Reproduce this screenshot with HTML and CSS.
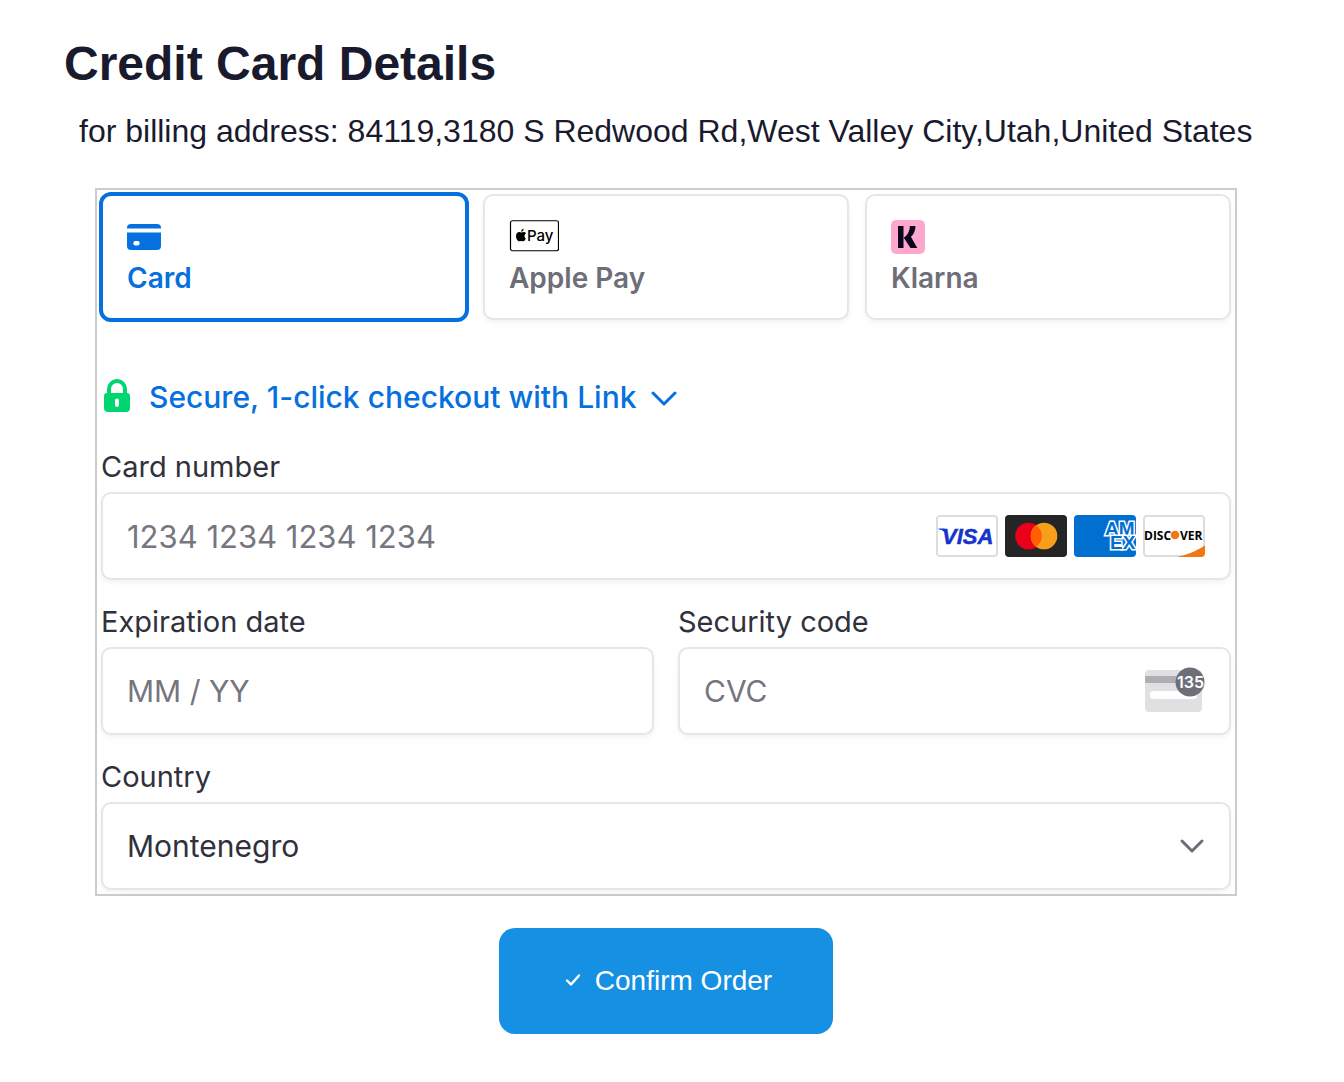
FILE: index.html
```
<!DOCTYPE html>
<html lang="en">
<head>
<meta charset="UTF-8" />
<meta name="viewport" content="width=device-width, initial-scale=1" />
<title>Credit Card Details</title>
<link rel="stylesheet" href="styles.css">
</head>
<body>

<main class="checkout">
  <h1>Credit Card Details</h1>
  <p class="address">for billing address: 84119,3180 S Redwood Rd,West Valley City,Utah,United States</p>

  <form id="paymentForm">
    <div class="payment">
      <div class="tabs" role="tablist">
        <button type="button" class="tab selected" role="tab" aria-selected="true">
          <span class="tabIcon">
            <svg width="34" height="26" viewBox="0 0 34 26" fill="#0570de">
              <path d="M0 4.500V4a4 4 0 0 1 4-4h26a4 4 0 0 1 4 4v.5z" />
              <path fill-rule="evenodd" d="M0 8.500h34V22a4 4 0 0 1-4 4H4a4 4 0 0 1-4-4zM8.500 17a2.200 2.200 0 0 0 0 4.400h2a2.200 2.200 0 0 0 0-4.400z" />
            </svg>
          </span>
          Card
        </button>
        <button type="button" class="tab" role="tab" aria-selected="false">
          <span class="tabIcon">
            <svg width="50" height="34" viewBox="0 0 50 34">
              <rect x="1.500" y=".75" width="48" height="30" rx="2" fill="#fff" stroke="#000" stroke-width="1.200" />
              <path d="M16.700 18.800c-.5 1.300-1.500 2.500-2.500 2.500-.8 0-1-.4-1.900-.4s-1.200.4-1.900.4C8.300 21.300 7 18 7 16c0-2.400 1.600-3.900 3.300-3.900.9 0 1.500.5 2.100.5.700 0 1.300-.6 2.400-.6.900 0 1.700.4 2.200 1.200-2 1.200-1.900 4.200-.3 5.600zM14.700 8.800c.1 1.500-1.100 2.900-2.500 2.900-.2-1.400 1.200-2.800 2.500-2.900z" />
              <text x="18" y="20.500" class="applePay">Pay</text>
            </svg>
          </span>
          Apple Pay
        </button>
        <button type="button" class="tab" role="tab" aria-selected="false">
          <span class="tabIcon">
            <svg width="34" height="34" viewBox="0 0 34 34">
              <rect width="34" height="34" rx="5" fill="#ffa8cd" />
              <path d="M7 6h5.500v22H7zM18.800 6h5.700c0 4.500-1.600 8.200-4.600 10.800L26.300 28h-6.800l-6.700-10.200c3.800-2.600 6-6.600 6-11.800z" fill="#0b051d" />
            </svg>
          </span>
          Klarna
        </button>
      </div>

      <button type="button" class="linkToggle">
        <svg width="28" height="36" viewBox="0 0 28 36">
          <path d="M6 16V10a8 8 0 0 1 16 0v6" fill="none" stroke="#00d66f" stroke-width="4" />
          <path fill-rule="evenodd" d="M4 14h20a3 3 0 0 1 3 3v12a4 4 0 0 1-4 4H5a4 4 0 0 1-4-4V17a3 3 0 0 1 3-3zM14 19.500a2 2 0 0 0-2 2V26a2 2 0 0 0 4 0v-4.500a2 2 0 0 0-2-2z" fill="#00d66f" />
        </svg>
        <span class="linkText">Secure, 1-click checkout with Link</span>
        <svg width="28" height="18" viewBox="0 0 28 18">
          <path d="M3 5l11 11 11-11" fill="none" stroke="#0570de" stroke-width="3" stroke-linecap="round" stroke-linejoin="round" />
        </svg>
      </button>

      <div class="fields">
        <div class="field wide">
          <label for="cardNumber">Card number</label>
          <div class="control">
            <input type="text" id="cardNumber" inputmode="numeric" placeholder="1234 1234 1234 1234" />
            <div class="brands">
              <svg width="62" height="42" viewBox="0 0 62 42">
                <rect x="1" y="1" width="60" height="40" rx="3" fill="#fff" stroke="#ddd" stroke-width="2" />
                <path d="M2.500 13.500h5c1.500 0 2.200.8 2.500 2l1.200 5C9.500 17 7 15 2.500 14.200z" fill="#1434cb" />
                <text x="6" y="29" class="visa">VISA</text>
              </svg>
              <svg width="62" height="42" viewBox="0 0 62 42">
                <rect width="62" height="42" rx="4" fill="#252525" />
                <circle cx="23.500" cy="21" r="13.300" fill="#eb001b" />
                <circle cx="39" cy="21" r="13.300" fill="#f79e1b" />
                <path d="M31.250 10.200a13.300 13.300 0 0 1 0 21.600 13.300 13.300 0 0 1 0-21.600z" fill="#ff5f00" />
              </svg>
              <svg width="62" height="42" viewBox="0 0 62 42">
                <rect width="62" height="42" rx="4" fill="#016fd0" />
                <text class="amex"><tspan x="31" y="20">AM</tspan><tspan x="36" y="34">EX</tspan></text>
              </svg>
              <svg width="62" height="42" viewBox="0 0 62 42">
                <rect x="1" y="1" width="60" height="40" rx="3" fill="#fff" stroke="#ddd" stroke-width="2" />
                <path d="M34 42c11-2.500 19-6 28-11.500V38a4 4 0 0 1-4 4z" fill="#f27712" />
                <text x="1" y="24.500" class="discover">DISC</text>
                <circle cx="32" cy="20" r="4.300" fill="#f27712" />
                <text x="37" y="24.500" class="discover">VER</text>
              </svg>
            </div>
          </div>
        </div>

        <div class="field">
          <label for="expiry">Expiration date</label>
          <div class="control">
            <input type="text" id="expiry" inputmode="numeric" placeholder="MM / YY" />
          </div>
        </div>

        <div class="field">
          <label for="cvc">Security code</label>
          <div class="control">
            <input type="text" id="cvc" inputmode="numeric" placeholder="CVC" />
            <svg width="60" height="48" viewBox="0 0 60 48">
              <rect y="3" width="57" height="42" rx="4" fill="#e0e0e2" />
              <path d="M0 9h57v7H0z" fill="#aeaeb3" />
              <rect x="5" y="24" width="47" height="8" rx="3" fill="#fff" />
              <circle cx="45" cy="15" r="14.500" fill="#6d6e78" />
              <text x="32" y="21" class="cvcDigits">135</text>
            </svg>
          </div>
        </div>

        <div class="field wide">
          <label for="country">Country</label>
          <div class="control">
            <select id="country">
              <option>Montenegro</option>
              <option>United States</option>
            </select>
            <svg width="26" height="18" viewBox="0 0 26 18">
              <path d="M3 4l10 10L23 4" fill="none" stroke="#6d6e78" stroke-width="3" stroke-linecap="round" stroke-linejoin="round" />
            </svg>
          </div>
        </div>
      </div>
    </div>

    <button type="submit" class="confirm">
      <svg width="16" height="16" viewBox="0 0 16 16">
        <path d="M2 7.500l4 4 8-9" fill="none" stroke="#fff" stroke-width="2.400" stroke-linecap="round" stroke-linejoin="round" />
      </svg>
      Confirm Order
    </button>
  </form>
</main>

</body>
</html>
```

FILE: styles.css
```
* {
  box-sizing: border-box;
}

body {
  margin: 0;
  background: #fff;
  color: #1a1a2e;
  font-family: "Liberation Sans", Arial, sans-serif;
}

button, input, select {
  font-family: inherit;
}

svg {
  display: block;
  flex: none;
}

.checkout {
  padding: 36px 76px 48px 64px;
}

h1 {
  margin: 0;
  font-size: 48px;
  line-height: 56px;
}

.address {
  margin: 20px 0 38px;
  padding-left: 15px;
  font-size: 32px;
  line-height: 38px;
  white-space: nowrap;
}

.payment {
  margin: 0 31px;
  padding: 4px;
  border: 2px solid #ccc;
  font-family: Inter, sans-serif;
  color: #30313d;
}

.tabs {
  display: grid;
  grid-template-columns: repeat(3, 1fr);
  gap: 16px;
}

.tab {
  height: 126px;
  padding: 24px 24px 0;
  display: flex;
  flex-direction: column;
  align-items: flex-start;
  background: #fff;
  border: 2px solid #e6e6e6;
  border-radius: 10px;
  box-shadow: 0 2px 4px rgba(0,0,0,0.04), 0 4px 12px rgba(0,0,0,0.02);
  color: #6d6e78;
  font-size: 28px;
  font-weight: 600;
  line-height: 36px;
  text-align: left;
  cursor: pointer;
}

.tab.selected {
  border-color: #0570de;
  box-shadow: 0 0 0 2px #0570de;
  color: #0570de;
}

.tabIcon {
  height: 34px;
  margin-bottom: 6px;
  display: flex;
  align-items: center;
}

.applePay {
  font: 500 15px Inter, sans-serif;
}

.linkToggle {
  margin: 57px 0 32px;
  padding: 0 2px;
  display: flex;
  align-items: center;
  background: none;
  border: none;
  color: #0570de;
  font-size: 30px;
  font-weight: 500;
  line-height: 40px;
  cursor: pointer;
}

.linkText {
  margin: 0 14px 0 18px;
}

.fields {
  display: grid;
  grid-template-columns: repeat(2, minmax(0, 1fr));
  gap: 24px;
}

.wide {
  grid-column: 1 / -1;
}

.field label {
  display: block;
  margin-bottom: 7px;
  font-size: 29px;
  line-height: 36px;
}

.control {
  height: 88px;
  padding: 0 24px;
  display: flex;
  align-items: center;
  background: #fff;
  border: 2px solid #e6e6e6;
  border-radius: 10px;
  box-shadow: 0 2px 4px rgba(0,0,0,0.04), 0 4px 12px rgba(0,0,0,0.02);
}

.control input,
.control select {
  flex: 1;
  min-width: 0;
  height: 100%;
  padding: 0;
  background: none;
  border: none;
  outline: none;
  appearance: none;
  color: #30313d;
  font-size: 30px;
}

#cardNumber {
  font-size: 31px;
}

.control input::placeholder {
  color: #757680;
  opacity: 1;
}

.brands {
  display: flex;
  gap: 7px;
}

.visa {
  font: italic 700 22px "Liberation Sans", sans-serif;
  fill: #1434cb;
  stroke: #1434cb;
  stroke-width: 0.5px;
}

.amex {
  font: 700 19px "Liberation Sans", sans-serif;
  fill: #016fd0;
  stroke: #fff;
  stroke-width: 3px;
  paint-order: stroke;
}

.discover {
  font: 700 12px "Open Sans", sans-serif;
}

.cvcDigits {
  font: 600 16px Inter, sans-serif;
  fill: #fff;
}

.confirm {
  margin: 32px auto 0;
  padding: 36px 61px 36px 66px;
  display: flex;
  align-items: center;
  gap: 14px;
  background: #1690e2;
  border: none;
  border-radius: 16px;
  color: #fff;
  font-size: 28px;
  line-height: 34px;
  cursor: pointer;
}
```
